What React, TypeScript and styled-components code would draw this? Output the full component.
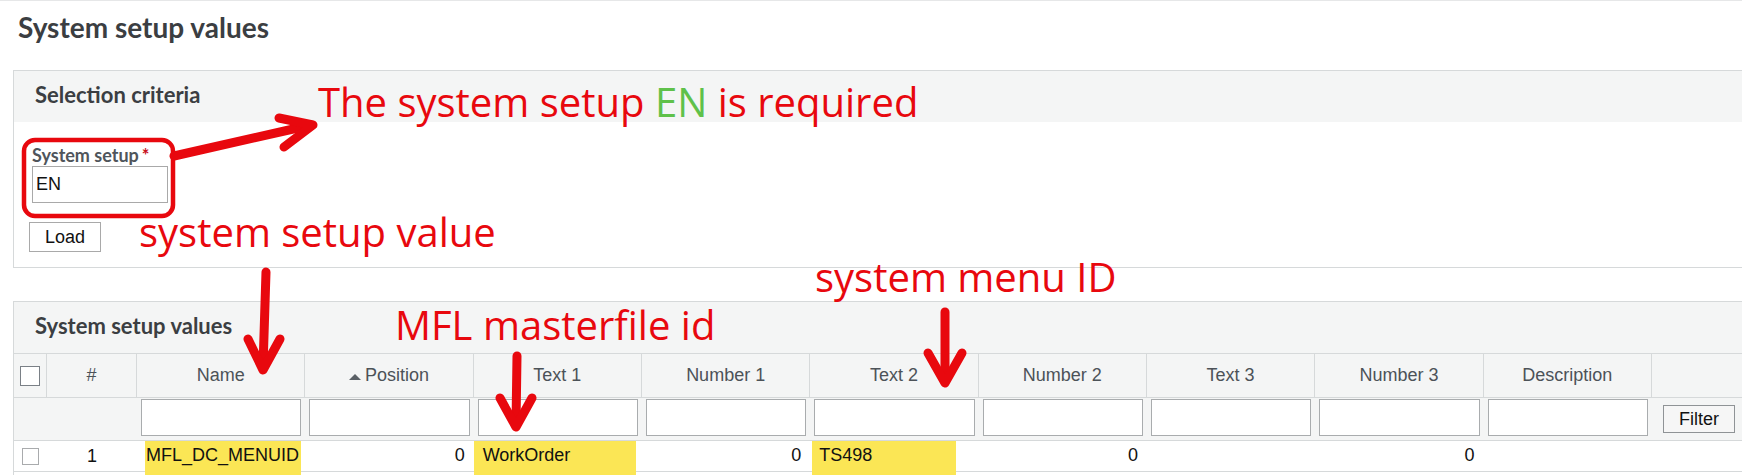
import React from 'react';
import styled, { createGlobalStyle } from 'styled-components';

const RED = '#e8080e';
const GREEN = '#5fc14a';
const LINE = '#d6d9da';
const SHADE = '#f4f5f5';

const GlobalStyle = createGlobalStyle`
  html, body {
    margin: 0;
    padding: 0;
    background: #ffffff;
    overflow: hidden;
  }
  body {
    font-family: 'Liberation Sans', Arial, sans-serif;
  }
`;

type Column = {
  key: string;
  label: string;
  numeric?: boolean;
  sorted?: boolean;
};

const columns: Column[] = [
  { key: 'name', label: 'Name' },
  { key: 'position', label: 'Position', numeric: true, sorted: true },
  { key: 'text1', label: 'Text 1' },
  { key: 'number1', label: 'Number 1', numeric: true },
  { key: 'text2', label: 'Text 2' },
  { key: 'number2', label: 'Number 2', numeric: true },
  { key: 'text3', label: 'Text 3' },
  { key: 'number3', label: 'Number 3', numeric: true },
  { key: 'description', label: 'Description' },
];

const rows: Record<string, string>[] = [
  {
    name: 'MFL_DC_MENUID',
    position: '0',
    text1: 'WorkOrder',
    number1: '0',
    text2: 'TS498',
    number2: '0',
    text3: '',
    number3: '0',
    description: '',
  },
];

// yellow marker strokes drawn over the first row
const highlights: Record<string, { left: number; width: number }> = {
  name: { left: 8, width: 156 },
  text1: { left: 0, width: 162 },
  text2: { left: 2, width: 144 },
};

export default function App() {
  return (
    <Page>
      <GlobalStyle />
      <Title>System setup values</Title>

      <Panel $gap={26}>
        <PanelHeader>Selection criteria</PanelHeader>
        <FormBody>
          <FieldLabel>
            System setup<Required>*</Required>
          </FieldLabel>
          <TextInput defaultValue="EN" />
          <PlainButton $width={72} $height={30} $shift={-3}>Load</PlainButton>
        </FormBody>
      </Panel>

      <Panel $gap={33}>
        <PanelHeader>System setup values</PanelHeader>

        <GridRow $height={43} $shade>
          <HeadCell>
            <CheckBox $size={20} $dark />
          </HeadCell>
          <HeadCell>#</HeadCell>
          {columns.map((c) => (
            <HeadCell key={c.key}>
              {c.sorted && <SortUp />}
              {c.label}
            </HeadCell>
          ))}
          <HeadCell />
        </GridRow>

        <GridRow $height={42} $shade>
          <FilterCell />
          <FilterCell />
          {columns.map((c) => (
            <FilterCell key={c.key}>
              <FilterInput />
            </FilterCell>
          ))}
          <ButtonCell>
            <PlainButton $width={72} $height={28} $grey>Filter</PlainButton>
          </ButtonCell>
        </GridRow>

        {rows.map((r, i) => (
          <GridRow key={i} $height={30}>
            <CenterCell>
              <CheckBox $size={17} />
            </CenterCell>
            <CenterCell>{i + 1}</CenterCell>
            {columns.map((c) => {
              const hl = highlights[c.key];
              return (
                <DataCell key={c.key} $numeric={c.numeric}>
                  {hl && <Highlight $left={hl.left} $width={hl.width} />}
                  <CellText>{r[c.key]}</CellText>
                </DataCell>
              );
            })}
            <DataCell />
          </GridRow>
        ))}
        <GridRow $height={30}>
          <CenterCell />
        </GridRow>
      </Panel>

      <Overlay>
        <Sketch viewBox="0 0 1742 475" width={1742} height={475}>
          <rect x="24" y="139" width="149" height="76" rx="11" fill="none" stroke={RED} strokeWidth="4.5" />
          <g stroke={RED} strokeWidth="9" strokeLinecap="round" strokeLinejoin="round" fill="none">
            <line x1="174" y1="155" x2="311" y2="124" />
            <polyline points="279,117 313,124 284,146" />
            <line x1="266" y1="271" x2="263" y2="366" />
            <polyline points="248,338 263,369 280,338" />
            <line x1="517" y1="355" x2="516" y2="423" />
            <polyline points="500,397 516,426 532,397" />
            <line x1="945" y1="311" x2="945" y2="379" />
            <polyline points="928,352 945,382 962,352" />
          </g>
        </Sketch>
        <Note $x={318} $y={81}>
          The system setup <Green>EN</Green> is required
        </Note>
        <Note $x={139} $y={211}>system setup value</Note>
        <Note $x={395} $y={304}>MFL masterfile id</Note>
        <Note $x={815} $y={256}>system menu ID</Note>
      </Overlay>
    </Page>
  );
}

const Page = styled.div`
  position: relative;
  width: 1742px;
  height: 475px;
  overflow: hidden;
  box-sizing: border-box;
  border-top: 1px solid #e6e7e8;
  padding-left: 13px;
`;

const Title = styled.h1`
  margin: 9px 0 0 5px;
  font-family: Lato, 'Liberation Sans', sans-serif;
  font-weight: 700;
  font-size: 28px;
  line-height: 34px;
  color: #3b3e42;
`;

const Panel = styled.section<{ $gap: number }>`
  width: 1760px;
  margin-top: ${(p) => p.$gap}px;
  border: 1px solid ${LINE};
  background: #ffffff;
`;

const PanelHeader = styled.h2`
  box-sizing: border-box;
  height: 51px;
  margin: 0;
  padding: 11px 21px 0;
  background: ${SHADE};
  font-family: Lato, 'Liberation Sans', sans-serif;
  font-weight: 700;
  font-size: 22px;
  line-height: 26px;
  color: #3b3e42;
`;

const FormBody = styled.div`
  display: flex;
  flex-direction: column;
  align-items: flex-start;
  padding: 23px 18px 15px;
`;

const FieldLabel = styled.label`
  font-family: Lato, 'Liberation Sans', sans-serif;
  font-weight: 700;
  font-size: 18px;
  line-height: 21px;
  color: #4f555b;
`;

const Required = styled.span`
  margin-left: 3px;
  color: #c8101c;
`;

const TextInput = styled.input`
  box-sizing: border-box;
  width: 136px;
  height: 37px;
  margin: 0;
  padding: 0 3px;
  border: 1px solid #a9a9a9;
  border-radius: 0;
  font-family: 'Liberation Sans', Arial, sans-serif;
  font-size: 18px;
  color: #111111;
  outline: none;
`;

const PlainButton = styled.button<{ $width: number; $height: number; $shift?: number; $grey?: boolean }>`
  box-sizing: border-box;
  width: ${(p) => p.$width}px;
  height: ${(p) => p.$height}px;
  margin: ${(p) => (p.$shift !== undefined ? `19px 0 0 ${p.$shift}px` : '0')};
  padding: 0;
  border: 1px solid ${(p) => (p.$grey ? '#8f9396' : '#a9a9a9')};
  border-radius: 0;
  background: ${(p) => (p.$grey ? '#f6f6f6' : '#ffffff')};
  font-family: 'Liberation Sans', Arial, sans-serif;
  font-size: 18px;
  color: #111111;
`;

const GridRow = styled.div<{ $height: number; $shade?: boolean }>`
  display: grid;
  grid-template-columns: 33px 90px repeat(9, 168.33px) 1fr;
  height: ${(p) => p.$height}px;
  border-top: 1px solid ${LINE};
  background: ${(p) => (p.$shade ? SHADE : '#ffffff')};
`;

const HeadCell = styled.div`
  display: flex;
  align-items: center;
  justify-content: center;
  border-right: 1px solid ${LINE};
  font-size: 18px;
  color: #4c5258;
  white-space: nowrap;
`;

const SortUp = styled.span`
  width: 0;
  height: 0;
  margin: 3px 4px 0 0;
  border-left: 6px solid transparent;
  border-right: 6px solid transparent;
  border-bottom: 6px solid #5a6066;
`;

const CheckBox = styled.span<{ $size: number; $dark?: boolean }>`
  box-sizing: border-box;
  width: ${(p) => p.$size}px;
  height: ${(p) => p.$size}px;
  border: 1px solid ${(p) => (p.$dark ? '#7a8086' : '#a9abad')};
  background: #ffffff;
`;

const FilterCell = styled.div`
  padding: 1px 4px 0;
`;

const FilterInput = styled.input`
  box-sizing: border-box;
  display: block;
  width: 100%;
  height: 37px;
  margin: 0;
  border: 1px solid #a9acae;
  border-radius: 0;
  background: #ffffff;
  outline: none;
`;

const ButtonCell = styled.div`
  display: flex;
  align-items: center;
  padding-left: 11px;
`;

const CenterCell = styled.div`
  display: flex;
  align-items: center;
  justify-content: center;
  font-size: 18px;
  color: #111111;
`;

const DataCell = styled.div<{ $numeric?: boolean }>`
  position: relative;
  padding: 0 9px;
  text-align: ${(p) => (p.$numeric ? 'right' : 'left')};
  font-size: 18px;
  line-height: 29px;
  color: #111111;
  white-space: nowrap;
`;

const CellText = styled.span`
  position: relative;
  z-index: 1;
`;

const Highlight = styled.span<{ $left: number; $width: number }>`
  position: absolute;
  z-index: 0;
  top: 0;
  bottom: -6px;
  left: ${(p) => p.$left}px;
  width: ${(p) => p.$width}px;
  background: #fbe655;
`;

const Overlay = styled.div`
  position: absolute;
  inset: 0;
  z-index: 5;
  pointer-events: none;
`;

const Sketch = styled.svg`
  position: absolute;
  left: 0;
  top: 0;
`;

const Note = styled.div<{ $x: number; $y: number }>`
  position: absolute;
  left: ${(p) => p.$x}px;
  top: ${(p) => p.$y}px;
  font-family: 'Open Sans', 'Noto Sans', sans-serif;
  font-size: 40px;
  line-height: 40px;
  color: ${RED};
  white-space: nowrap;
`;

const Green = styled.span`
  color: ${GREEN};
`;
